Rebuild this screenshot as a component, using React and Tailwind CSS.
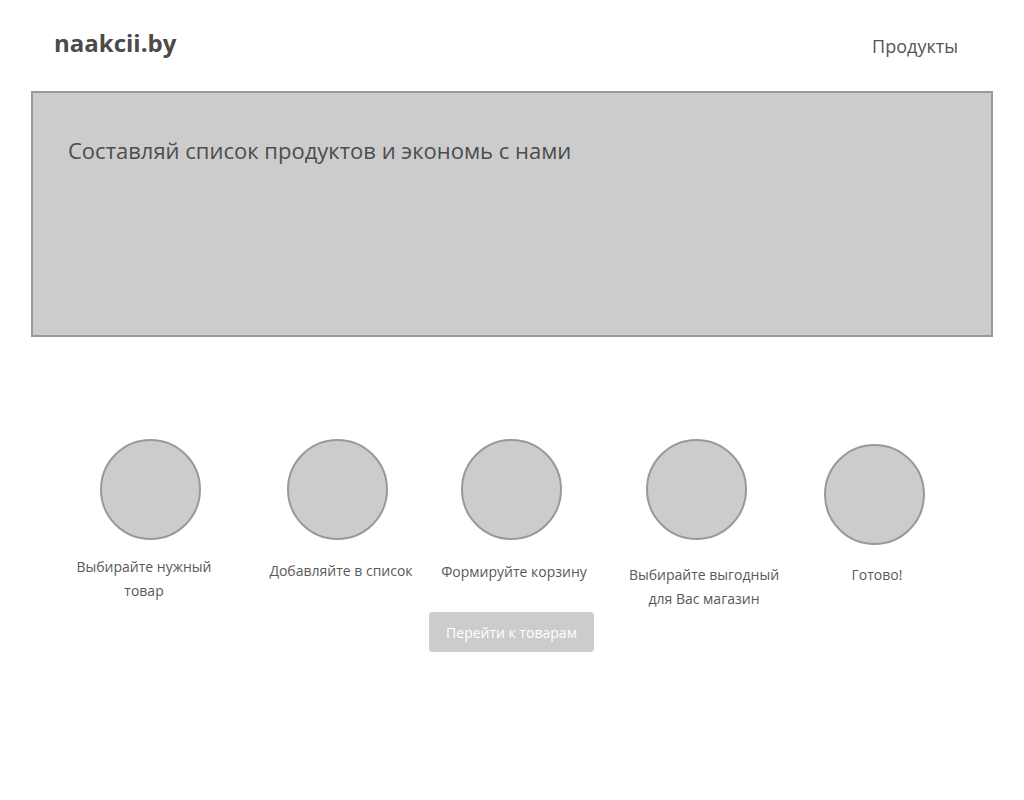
export default function App() {
  const font = { fontFamily: '"Open Sans", "Noto Sans", sans-serif' };
  return (
    <div className="w-[1024px] h-[800px] bg-white text-[#555]" style={font}>
      <header className="flex justify-between items-start h-[91px] pl-[54px] pr-[66px]">
        <div className="mt-[27px] text-[24px] leading-[32px] font-bold text-[#4a4a4a]">naakcii.by</div>
        <nav className="mt-[33px] text-[18px] leading-[26px] text-[#555]">Продукты</nav>
      </header>
      <section className="mx-[31px] h-[246px] border-2 border-[#999] bg-[#ccc] pl-[35px] pt-[42px]">
        <h1 className="text-[22px] leading-[30px] text-[#4d4d4d]">Составляй список продуктов и экономь с нами</h1>
      </section>
      <div className="flex items-start mt-[102px] pl-[69px] text-[14px] leading-[24px] text-[#595959]">
        <div className="w-[150px] flex flex-col items-center">
          <div className="w-[101px] h-[101px] rounded-full border-2 border-[#999] bg-[#ccc] ml-[12px]" />
          <p className="mt-[15px] text-center">Выбирайте нужный товар</p>
        </div>
        <div className="w-[150px] ml-[47px] flex flex-col items-center">
          <div className="w-[101px] h-[101px] rounded-full border-2 border-[#999] bg-[#ccc] mr-[8px]" />
          <p className="mt-[19px] text-center">Добавляйте в список</p>
        </div>
        <div className="w-[150px] ml-[23px] flex flex-col items-center">
          <div className="w-[101px] h-[101px] rounded-full border-2 border-[#999] bg-[#ccc] mr-[6px]" />
          <p className="mt-[20px] text-center">Формируйте корзину</p>
        </div>
        <div className="w-[160px] ml-[35px] flex flex-col items-center">
          <div className="w-[101px] h-[101px] rounded-full border-2 border-[#999] bg-[#ccc] mr-[16px]" />
          <p className="mt-[23px] text-center">Выбирайте выгодный для Вас магазин</p>
        </div>
        <div className="w-[100px] ml-[43px] flex flex-col items-center">
          <div className="w-[101px] h-[101px] rounded-full border-2 border-[#999] bg-[#ccc] mr-[6px] mt-[5px]" />
          <p className="mt-[18px] text-center">Готово!</p>
        </div>
      </div>
      <div className="flex justify-center mt-[1px] pr-[1px]">
        <button className="w-[165px] h-[40px] rounded-[4px] bg-[#ccc] text-white text-[14px]">Перейти к товарам</button>
      </div>
    </div>
  );
}
